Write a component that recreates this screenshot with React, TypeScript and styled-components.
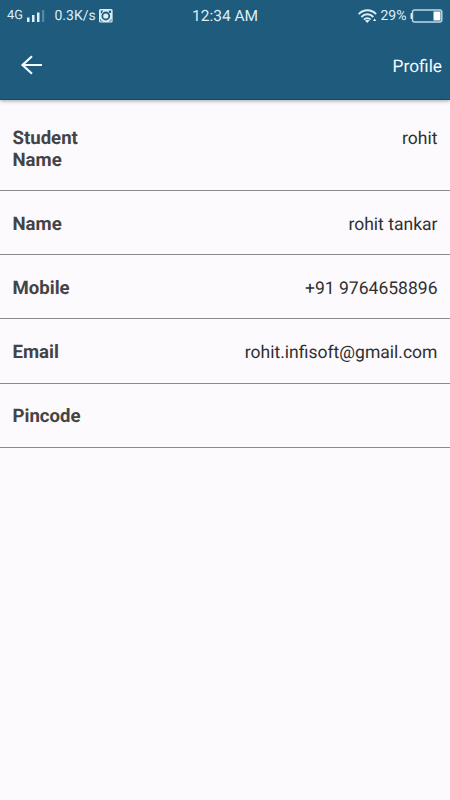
import React from "react";
import styled, { createGlobalStyle } from "styled-components";

const GlobalStyle = createGlobalStyle`
  *, *::before, *::after { box-sizing: border-box; }
  body {
    margin: 0;
    background: #fcfafc;
    font-family: Roboto, "Liberation Sans", sans-serif;
    text-rendering: geometricPrecision;
  }
`;

const Screen = styled.div`
  width: 100%;
  min-height: 800px;
  background: #fcfafc;
  overflow: hidden;
`;

const Header = styled.header`
  height: 100px;
  background: #1e5b7d;
  border-bottom: 1px solid #164a6b;
  box-shadow: 0 1px 4px rgba(0, 0, 0, 0.35);
  color: #f2fbff;
`;

const StatusBar = styled.div`
  display: grid;
  grid-template-columns: 1fr auto 1fr;
  height: 31px;
  padding: 0 7px;
  align-items: center;
  color: #dceef7;
`;

const StatusGroup = styled.div<{ $end?: boolean }>`
  display: flex;
  align-items: center;
  justify-content: ${(p) => (p.$end ? "flex-end" : "flex-start")};
  svg { display: block; flex: none; }
`;

const StatusText = styled.span<{ $size: number; $width: number; $gap?: number }>`
  width: ${(p) => p.$width}px;
  margin-left: ${(p) => p.$gap ?? 0}px;
  padding-top: 1px;
  font-size: ${(p) => p.$size}px;
  line-height: 31px;
  white-space: nowrap;
`;

const NetworkText = styled(StatusText)`
  padding: 0 0 1px;
`;

const Toolbar = styled.div`
  display: flex;
  align-items: center;
  justify-content: space-between;
  height: 68px;
  padding: 0 8px 0 20px;
`;

const BackButton = styled.button`
  padding: 0;
  border: 0;
  background: none;
  color: inherit;
  svg { display: block; }
`;

const Title = styled.h1`
  margin: 0;
  padding-top: 3px;
  font-size: 17.3px;
  line-height: 22px;
  font-weight: 400;
`;

const Details = styled.dl`
  margin: 0;
`;

const Row = styled.div`
  display: flex;
  justify-content: space-between;
  height: 64.2px;
  padding: 22px 12.5px 0;
  border-bottom: 1px solid #8b898b;
  line-height: 22px;
  &:first-child { height: 91px; padding-top: 27px; }
  &:last-child { padding-top: 21.5px; }
`;

const Label = styled.dt`
  width: 100px;
  font-size: 18.6px;
  font-weight: 700;
  color: #444345;
`;

const Value = styled.dd`
  margin: 0;
  padding-top: 1px;
  font-size: 17.55px;
  color: #302f31;
`;

const SignalIcon = () => (
  <svg width="18" height="13" viewBox="0 0 18 13" fill="currentColor">
    <path d="M0 7.5h2.5V12H0zM5 5h2.5v7H5zM10 2.5h2.5V12H10z" />
    <path d="M15 0h2.3v12H15z" opacity=".3" />
  </svg>
);

const CameraIcon = () => (
  <svg width="14" height="14" viewBox="0 0 14 14" fill="none">
    <rect width="13.6" height="13.6" rx="1.5" fill="currentColor" />
    <path d="M1.8 1.5h2.5L2.5 4.5h-.7z" fill="#1e5b7d" />
    <circle cx="6.8" cy="7" r="3.5" stroke="#1e5b7d" strokeWidth="1.8" />
    <path d="M9.8 1.6h2.3v2.3H9.8z" fill="#1e5b7d" />
    <path d="M1.5 10v2.2h2.3M12.1 10v2.2H9.8" stroke="#1e5b7d" strokeWidth=".6" />
  </svg>
);

const WifiIcon = () => (
  <svg width="19" height="14" viewBox="0 0 19 14" fill="none" stroke="currentColor" strokeWidth="1.9">
    <path d="M.7 5.2c5-5.2 12.4-5.2 17.4 0M3.4 8c3.3-3.7 8.6-3.7 11.9 0M6 10.7c1.8-2.1 4.8-2.1 6.6 0" />
    <path d="m7 11.5 2.3 2.4 2.3-2.4c-1.3-1.1-3.3-1.1-4.6 0Z" fill="currentColor" stroke="none" />
    <path d="m16.6 9.5 1.7 2.4h-3.4z" fill="currentColor" stroke="none" />
  </svg>
);

const BatteryIcon = () => (
  <svg width="33" height="14" viewBox="0 0 33 14" fill="none">
    <path d="M2 4H1.5Q.5 4 .5 5v4q0 1 1 1H2z" fill="currentColor" />
    <rect x="2.5" y="1" width="29.3" height="12" rx="2" stroke="currentColor" strokeWidth="1.4" opacity=".85" />
    <path d="M23.5 2.5h7v9h-7z" fill="#fff" />
  </svg>
);

const BackIcon = () => (
  <svg width="24" height="20" viewBox="0 0 24 20" fill="none" stroke="currentColor" strokeWidth="2.2">
    <path d="M22 10H2.5M12 1.3 2.5 10 12 18.7" />
  </svg>
);

const profile = [
  { label: "Student Name", value: "rohit" },
  { label: "Name", value: "rohit tankar" },
  { label: "Mobile", value: "+91 9764658896" },
  { label: "Email", value: "rohit.infisoft@gmail.com" },
  { label: "Pincode", value: "" },
];

export default function App() {
  return (
    <Screen>
      <GlobalStyle />
      <Header>
        <StatusBar>
          <StatusGroup>
            <NetworkText $size={12.8} $width={20}>4G</NetworkText>
            <SignalIcon />
            <StatusText $size={14} $width={44.5} $gap={9.5}>0.3K/s</StatusText>
            <CameraIcon />
          </StatusGroup>
          <StatusText $size={15.5} $width={66}>12:34 AM</StatusText>
          <StatusGroup $end>
            <WifiIcon />
            <StatusText $size={14} $width={29.5} $gap={4}>29%</StatusText>
            <BatteryIcon />
          </StatusGroup>
        </StatusBar>
        <Toolbar>
          <BackButton aria-label="Back"><BackIcon /></BackButton>
          <Title>Profile</Title>
        </Toolbar>
      </Header>
      <Details>
        {profile.map(({ label, value }) => (
          <Row key={label}>
            <Label>{label}</Label>
            <Value>{value}</Value>
          </Row>
        ))}
      </Details>
    </Screen>
  );
}
